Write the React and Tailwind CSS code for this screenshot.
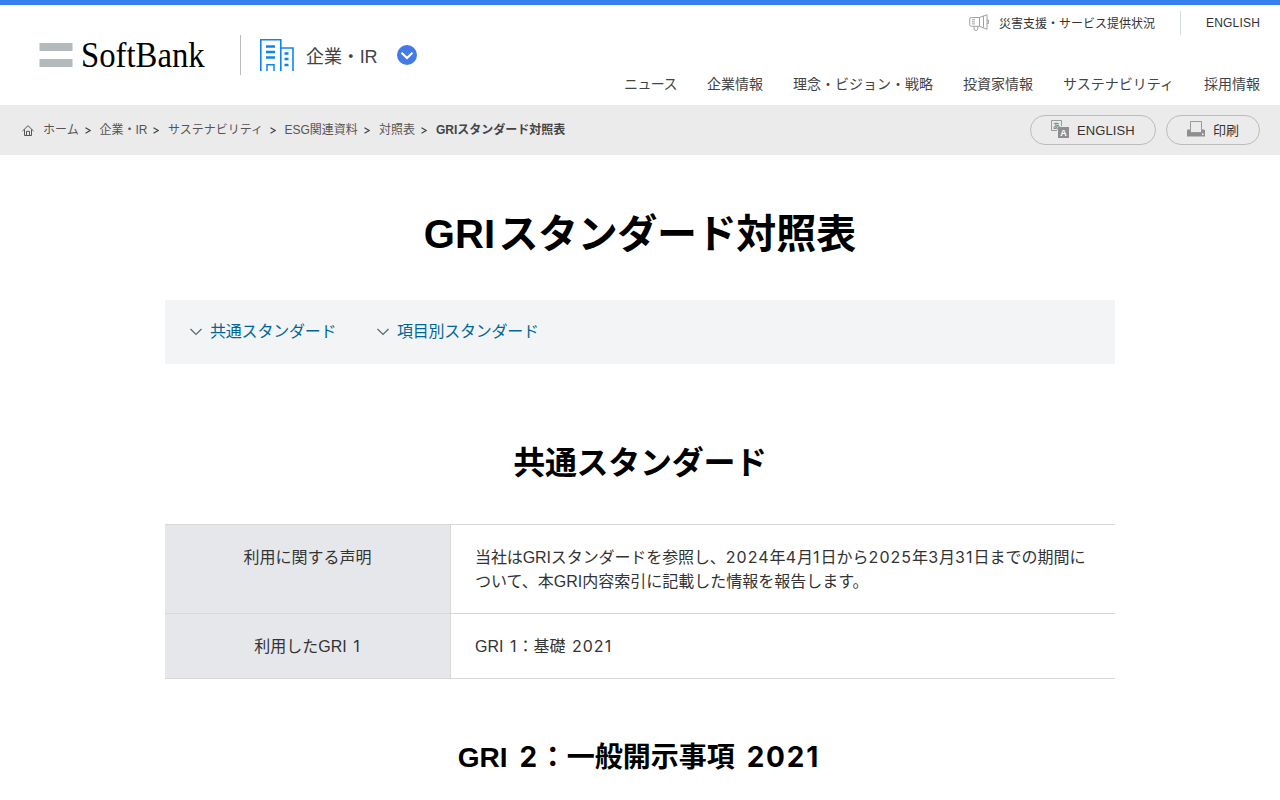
import React from 'react';

const navItems = [
    { label: 'ニュース', width: 'w-[53px] tracking-[-0.6px]' },
    { label: '企業情報', width: 'w-[56px]' },
    { label: '理念・ビジョン・戦略', width: 'w-[140px]' },
    { label: '投資家情報', width: 'w-[70px]' },
    { label: 'サステナビリティ', width: 'w-[111px]' },
    { label: '採用情報', width: 'w-[56px]' },
];

const crumbs = [
    { label: 'ホーム', width: 'w-[41.5px]' },
    { label: '企業・IR', width: 'w-[53.5px]' },
    { label: 'サステナビリティ', width: 'w-[101.5px]' },
    { label: 'ESG関連資料', width: 'w-[79.5px]' },
    { label: '対照表', width: 'w-[42px]' },
];

const Logo = () => (
    <div className="flex w-[167px] items-center">
        <svg width="34" height="24" viewBox="0 0 34 24" className="block shrink-0">
            <path d="M.5 0h33v8H.5zM.5 16h33v8H.5z" fill="#b4b9bc" />
        </svg>
        <span className="ml-2 shrink-0 origin-left scale-x-[0.935] pt-0.5 pr-1 text-[35px] leading-10 text-black font-['Liberation_Serif',serif]">SoftBank</span>
    </div>
);

const BuildingIcon = () => (
    <svg width="34" height="32" viewBox="0 0 34 32" fill="none" stroke="#0d84f2" className="block">
        <path d="M.8 32V.8h20V32M21 9h12v23" strokeWidth="1.6" />
        <path d="M6 7.5h9M6 13h9M6 18.5h9M24.5 14.5h4M24.5 20h4M24.5 26h4" strokeWidth="2.4" />
        <path d="M7 32v-6.2h7V32" strokeWidth="1.5" />
    </svg>
);

const MegaphoneIcon = () => (
    <svg width="20" height="18" viewBox="0 0 20 18" fill="none" stroke="#a0a0a0" className="block">
        <path d="M10.5 3.5H2.3Q.7 3.5.7 5v5.8q0 1.5 1.6 1.5h8.2zM10.5 3.5 18 .7v14.6l-7.5-3M18 6h1.4v3.5H18M5 12.5V14q0 2.5 2 2.5T8.8 14v-1.5M3 5.7h3M3 7.8h3M3 9.9h3M14.5 2v11.5" />
    </svg>
);

const HomeIcon = () => (
    <svg width="12" height="11" viewBox="0 0 12 11" fill="none" stroke="#555" className="block">
        <path d="M.5 6 6 .7 11.5 6M2.5 4.5v6h7v-6M4.5 10.5V6.3h3v4.2" />
    </svg>
);

const TranslateIcon = () => (
    <svg width="18" height="18" viewBox="0 0 18 18" className="block">
        <path d="M6 10.5H.5V.5h10V6" fill="none" stroke="#999" />
        <text x="1.8" y="8.5" fontSize="7.5" fontWeight="700" fill="#888" className="font-['Noto_Sans_CJK_JP',sans-serif]">あ</text>
        <path d="M7 7h11v11H7z" fill="#8e8e8e" />
        <text x="9.3" y="16" fontSize="9" fontWeight="700" fill="#fff" className="font-['Liberation_Sans',sans-serif]">A</text>
    </svg>
);

const PrintIcon = () => (
    <svg width="18" height="16" viewBox="0 0 18 16" className="block">
        <path d="M0 9.5q0-1 1-1h16q1 0 1 1v6H0z" fill="#8e8e8e" />
        <path d="M3.5.5h11v11h-11z" fill="#ebebeb" stroke="#999" />
        <path d="M15 12.5h1.5V14H15z" fill="#fff" />
    </svg>
);

const Chevron = () => (
    <svg width="12" height="8" viewBox="0 0 12 8" fill="none" stroke="#5c6670" strokeWidth="1.2" className="block">
        <path d="m.5 1 5.5 5.5L11.5 1" />
    </svg>
);

const Header = () => (
    <header className="flex h-[105px] justify-between border-t-[5px] border-[#377fee] bg-white pr-5 pl-[39px]">
        <div className="flex h-[100px] items-center">
            <Logo />
            <div className="ml-[34px] h-10 w-px bg-[#bbb]" />
            <div className="ml-[19px]"><BuildingIcon /></div>
            <div className="ml-3 w-[91px] pt-1 text-lg leading-6 tracking-[-0.1px] whitespace-nowrap text-[#444]">企業・IR</div>
            <svg width="20" height="20" viewBox="0 0 20 20" className="block">
                <circle cx="10" cy="10" r="10" fill="#437ae8" />
                <path d="m4.5 7.7 5.5 5.3 5.5-5.3" fill="none" stroke="#fff" strokeWidth="2.2" />
            </svg>
        </div>
        <div className="flex flex-col items-end">
            <div className="mt-1.5 flex h-6 items-center text-xs text-[#333]">
                <MegaphoneIcon />
                <span className="ml-2.5 w-[181px] pt-0.5 whitespace-nowrap">災害支援・サービス提供状況</span>
                <span className="h-6 w-px bg-[#cfdbe5]" />
                <span className="ml-[25px] w-[54px] tracking-[0.2px]">ENGLISH</span>
            </div>
            <nav className="mt-[37px] flex h-6 items-center gap-[30px] text-sm text-[#444]">
                {navItems.map((item) => (
                    <a key={item.label} href="#" className={`${item.width} whitespace-nowrap`}>{item.label}</a>
                ))}
            </nav>
        </div>
    </header>
);

const Breadcrumb = () => (
    <div className="flex h-[50px] items-center justify-between bg-[#ebebeb] pr-5 pl-[22px]">
        <div className="flex items-center text-xs whitespace-nowrap text-[#555]">
            <HomeIcon />
            <span className="w-[9px]" />
            {crumbs.map((crumb) => (
                <React.Fragment key={crumb.label}>
                    <a href="#" className={crumb.width}>{crumb.label}</a>
                    <svg width="6" height="7" viewBox="0 0 6 7" fill="none" stroke="#444" strokeWidth="1.2" className="mr-[9px] block">
                        <path d="m.5.8 4.7 2.7L.5 6.2" />
                    </svg>
                </React.Fragment>
            ))}
            <span className="font-bold text-[#444]">GRIスタンダード対照表</span>
        </div>
        <div className="flex gap-2.5 text-[13px] text-[#333]">
            <button className="flex h-[30px] w-[126px] items-center rounded-full border border-[#bbb] pl-5">
                <span className="pb-0.5"><TranslateIcon /></span>
                <span className="ml-2 pt-px tracking-[0.1px]">ENGLISH</span>
            </button>
            <button className="flex h-[30px] w-[94px] items-center rounded-full border border-[#bbb] pl-5">
                <span className="pb-0.5"><PrintIcon /></span>
                <span className="ml-2 pt-px">印刷</span>
            </button>
        </div>
    </div>
);

// Wider figures than the surrounding Latin text; leading-none keeps them from stretching the line
const Num = ({ children }) => <span className="leading-none tracking-[0.065em] font-['Inter']">{children}</span>;

const App = () => {
    return (
        <div className="h-[800px] overflow-hidden bg-white font-['Liberation_Sans','Noto_Sans_CJK_JP',sans-serif] text-[#333]">
            <Header />
            <Breadcrumb />
            <main className="mx-auto w-[950px]">
                <h1 className="mt-[49px] text-center text-[40px] leading-[60px] font-bold text-black">
                    <span className="mr-[3px] tracking-[0.2px]">GRI</span><span className="tracking-[-0.35px]">スタンダード</span>対照表
                </h1>

                <div className="mt-9 flex h-16 items-center bg-[#f3f4f6] pl-[25px] text-base text-[#006699]">
                    <Chevron />
                    <a href="#" className="ml-2 w-[167px] tracking-[-0.2px]">共通スタンダード</a>
                    <Chevron />
                    <a href="#" className="ml-2 tracking-[-0.25px]">項目別スタンダード</a>
                </div>

                <h2 className="mt-[75px] text-center text-[32px] leading-[48px] font-bold tracking-[-0.3px] text-black">共通スタンダード</h2>

                <table className="mt-[37px] w-full table-fixed border-separate border-spacing-0 border-t border-[#d8d8d8] text-base leading-6">
                    <tbody>
                        <tr>
                            <th className="w-[286px] border-r border-b border-[#d8d8d8] bg-[#e6e7eb] pt-[21px] pb-[19px] align-top font-normal">利用に関する声明</th>
                            <td className="border-b border-[#d8d8d8] pt-[21px] pb-[19px] pl-6 align-top whitespace-nowrap">
                                <span className="tracking-[-0.1px]">当社はGRIスタンダードを参照し、</span><Num>2024</Num>年<Num>4</Num>月<Num>1</Num>日から<Num>2025</Num>年<Num>3</Num>月<Num>31</Num>日までの期間に<br />
                                ついて、本GRI内容索引に記載した情報を報告します。
                            </td>
                        </tr>
                        <tr className="[word-spacing:2px]">
                            <th className="border-r border-b border-[#d8d8d8] bg-[#e6e7eb] pt-[21px] pb-[19px] align-top font-normal">利用したGRI <Num>1</Num></th>
                            <td className="border-b border-[#d8d8d8] pt-[21px] pb-[19px] pl-6 align-top">GRI <Num>1</Num>：基礎 <Num>2021</Num></td>
                        </tr>
                    </tbody>
                </table>

                <h3 className="mt-[58px] pr-0.5 text-center text-[28px] leading-[42px] font-bold text-black [word-spacing:4px]">GRI <Num>2</Num>：一般開示事項 <Num>2021</Num></h3>
            </main>
        </div>
    );
};

export default App;
